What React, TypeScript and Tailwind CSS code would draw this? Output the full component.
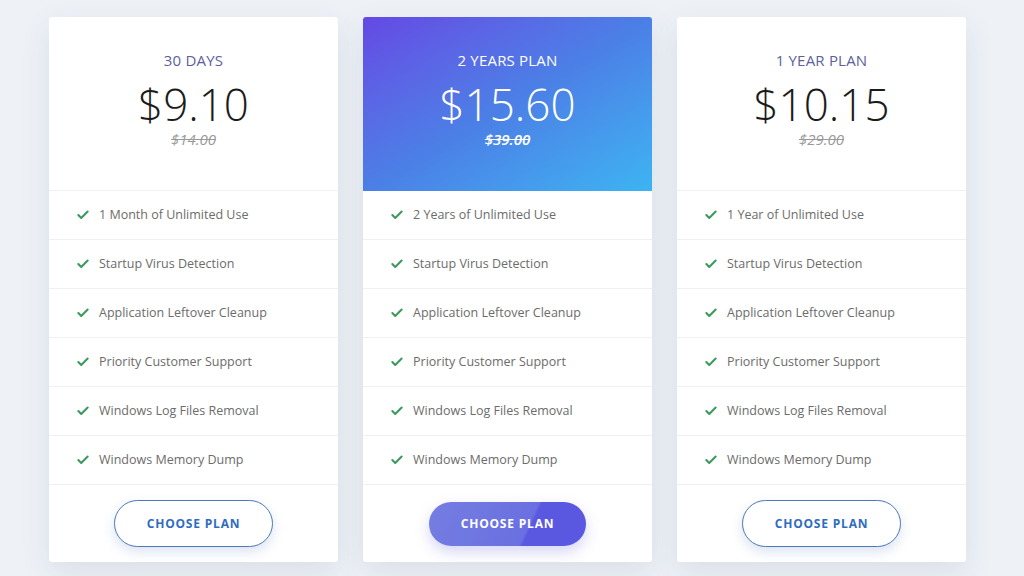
import { Check } from "lucide-react";

const plans = [
  {
    name: "30 DAYS",
    price: "$9.10",
    old: "$14.00",
    first: "1 Month of Unlimited Use",
    featured: false,
  },
  {
    name: "2 YEARS PLAN",
    price: "$15.60",
    old: "$39.00",
    first: "2 Years of Unlimited Use",
    featured: true,
  },
  {
    name: "1 YEAR PLAN",
    price: "$10.15",
    old: "$29.00",
    first: "1 Year of Unlimited Use",
    featured: false,
  },
];

const features = [
  "Startup Virus Detection",
  "Application Leftover Cleanup",
  "Priority Customer Support",
  "Windows Log Files Removal",
  "Windows Memory Dump",
];

function PlanCard({ plan }: { plan: (typeof plans)[number] }) {
  const items = [plan.first, ...features];

  return (
    <div className="w-[289px] h-[545px] bg-white rounded-[3px] shadow-[0_10px_30px_rgba(40,60,100,0.10)] flex flex-col overflow-hidden">
      {/* Header */}
      <div
        className={
          plan.featured
            ? "h-[174px] flex flex-col items-center pt-[33px] bg-gradient-to-br from-[#6448e4] via-[#4b7fe6] to-[#3cb4f2] text-white"
            : "h-[174px] flex flex-col items-center pt-[33px] border-b border-[#f0f0f0]"
        }
      >
        <div
          className={
            plan.featured
              ? "text-[15px] leading-[20px] tracking-[0.2px] text-white font-medium"
              : "text-[15px] leading-[20px] tracking-[0.2px] text-[#5d5f9c]"
          }
        >
          {plan.name}
        </div>
        <div
          className={
            plan.featured
              ? "mt-[12px] text-[44px] leading-[44px] font-light text-white"
              : "mt-[12px] text-[44px] leading-[44px] font-light text-[#1b1b1b]"
          }
        >
          {plan.price}
        </div>
        <div
          className={
            plan.featured
              ? "mt-[4px] text-[15px] leading-[18px] italic line-through text-white font-semibold"
              : "mt-[4px] text-[15px] leading-[18px] italic line-through text-[#9a9a9a]"
          }
        >
          {plan.old}
        </div>
      </div>

      {/* Features */}
      <ul className="flex flex-col">
        {items.map((item) => (
          <li
            key={item}
            className="h-[49px] flex items-center gap-[9px] pl-[27px] border-b border-[#f0f0f0] text-[12.5px] text-[#6c6c6c]"
          >
            <Check className="w-[14px] h-[14px] text-[#3a9a5c]" strokeWidth={3.5} />
            <span>{item}</span>
          </li>
        ))}
      </ul>

      {/* Action */}
      <div className="flex-1 flex items-center justify-center">
        {plan.featured ? (
          <button className="w-[157px] h-[44px] rounded-full bg-[linear-gradient(115deg,#757ee2_0%,#6a70e0_62%,#5a58e0_64%,#5a58e0_100%)] text-white text-[12px] font-bold tracking-[0.8px] shadow-[0_6px_14px_rgba(90,90,220,0.25)]">
            CHOOSE PLAN
          </button>
        ) : (
          <button className="w-[159px] h-[47px] rounded-full bg-white border border-[#4a78b8] text-[#2f6cbf] text-[12px] font-bold tracking-[0.8px] shadow-[0_5px_12px_rgba(60,100,180,0.18)]">
            CHOOSE PLAN
          </button>
        )}
      </div>
    </div>
  );
}

export default function App() {
  return (
    <div
      className="w-[1024px] h-[576px] bg-[#eef2f7] overflow-hidden"
      style={{ fontFamily: '"Open Sans", "Noto Sans", sans-serif' }}
    >
      <div className="flex gap-[25px] pl-[49px] pt-[17px]">
        {plans.map((plan) => (
          <PlanCard key={plan.name} plan={plan} />
        ))}
      </div>
    </div>
  );
}
